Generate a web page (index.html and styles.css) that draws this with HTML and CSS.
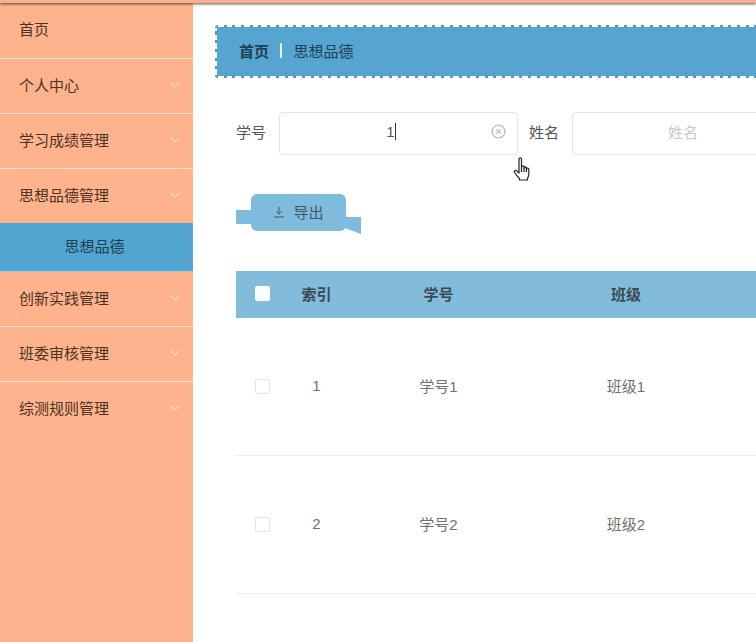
FILE: index.html
```html
<!DOCTYPE html>
<html lang="zh">
<head>
<meta charset="utf-8">
<title>思想品德</title>
<link rel="stylesheet" href="styles.css">
</head>
<body>
<header class="topbar"></header>
<div class="layout">
  <aside class="sidebar">
    <div class="menu-item first">首页</div>
    <div class="menu-item">个人中心<svg class="chev" viewBox="0 0 10 6"><path d="M1 1l4 4 4-4"/></svg></div>
    <div class="menu-item">学习成绩管理<svg class="chev" viewBox="0 0 10 6"><path d="M1 1l4 4 4-4"/></svg></div>
    <div class="menu-item open">思想品德管理<svg class="chev" viewBox="0 0 10 6"><path d="M1 1l4 4 4-4"/></svg></div>
    <div class="sub-item">思想品德</div>
    <div class="menu-item">创新实践管理<svg class="chev" viewBox="0 0 10 6"><path d="M1 1l4 4 4-4"/></svg></div>
    <div class="menu-item">班委审核管理<svg class="chev" viewBox="0 0 10 6"><path d="M1 1l4 4 4-4"/></svg></div>
    <div class="menu-item last">综测规则管理<svg class="chev" viewBox="0 0 10 6"><path d="M1 1l4 4 4-4"/></svg></div>
  </aside>
  <main class="main">
    <nav class="crumbs"><b>首页</b><span class="sep"></span><span>思想品德</span></nav>
    <form class="filters">
      <label class="flabel">学号</label>
      <div class="field first-field"><span class="val">1<i class="caret"></i></span>
        <svg class="clear" viewBox="0 0 14 14"><circle cx="7" cy="7" r="6"/><path d="M5 5l4 4M9 5l-4 4"/></svg>
      </div>
      <label class="flabel second">姓名</label>
      <div class="field second-field"><span class="ph">姓名</span></div>
    </form>
    <div class="actions">
      <div class="export">
        <span class="tail tail-l"></span>
        <button type="button" class="btn"><svg class="dl" viewBox="0 0 12 12"><path d="M6 1v7M3 5.2L6 8l3-2.8M1 11h10"/></svg>导出</button>
        <span class="tail tail-r"></span>
      </div>
    </div>
    <table class="grid">
      <colgroup><col class="c1"><col class="c2"><col class="c3"><col class="c4"><col class="c5"></colgroup>
      <thead>
        <tr><th class="check"><span class="box head-box"></span></th><th>索引</th><th>学号</th><th>班级</th><th></th></tr>
      </thead>
      <tbody>
        <tr><td class="check"><span class="box"></span></td><td>1</td><td>学号1</td><td>班级1</td><td></td></tr>
        <tr><td class="check"><span class="box"></span></td><td>2</td><td>学号2</td><td>班级2</td><td></td></tr>
      </tbody>
    </table>
  </main>
</div>
<svg class="cursor" viewBox="0 0 18 26"><path d="M6 2c0-1.500 2.500-1.500 2.500 0v8c0-1.500 2.500-1.500 2.500 0v1c0-1.400 2.400-1.400 2.400 0v1c0-1.300 2.400-1.300 2.400 0v5c0 2-.8 3-1.300 4.500v1.500H6.500v-1.500C5 20 3.500 18.500 1.500 15.500c-1-1.600.9-2.800 2.200-1.600L6 16z"/><path d="M8.500 10v5M11 11v4M13.400 12v3"/></svg>
</body>
</html>
```
FILE: styles.css
```css
* { box-sizing: border-box; }
html, body { margin: 0; height: 100%; overflow: hidden; }
body {
  width: 756px;
  height: 642px;
  background: #fff;
  font-family: "Liberation Sans", "Noto Sans CJK SC", sans-serif;
  font-size: 15px;
  color: #333;
  display: flex;
  flex-direction: column;
  position: relative;
}
.topbar {
  height: 3px;
  flex: none;
  background: #f8b08c;
  box-shadow: 0 1px 3px rgba(40, 30, 25, .8);
  position: relative;
  z-index: 2;
}
.layout { flex: 1; display: flex; min-height: 0; }
.sidebar { width: 193px; flex: none; background: #ffb38d; }
.menu-item {
  height: 55px;
  border-bottom: 1px solid #fde3d3;
  padding: 0 13px 3px 19px;
  display: flex;
  align-items: center;
  justify-content: space-between;
  color: #4a3226;
  font-size: 15px;
}
.menu-item.first { height: 56px; padding-bottom: 4px; }
.menu-item.open { height: 54px; border-bottom: 0; }
.menu-item.last { border-bottom: 0; padding-bottom: 4px; }
.chev { width: 10px; height: 6px; fill: none; stroke: #fdd9c5; stroke-width: 1.2; }
.sub-item {
  height: 49px;
  background: #53a5d1;
  border-bottom: 1px solid #a9c9d6;
  display: flex;
  align-items: center;
  justify-content: center;
  color: #1f3f55;
  padding: 0 4px 3px 0;
}
.main { flex: 1; min-width: 0; padding: 22px 0 0 23px; overflow: hidden; }
.crumbs {
  margin: 0 -40px 0 -1px;
  height: 53px;
  background:
    linear-gradient(#56a5d1, #56a5d1) 2px 2px / calc(100% - 4px) calc(100% - 4px) no-repeat,
    repeating-linear-gradient(90deg, #5098c4 0 3px, transparent 3px 8.700px) 0 0 / 100% 3px no-repeat,
    repeating-linear-gradient(90deg, #5098c4 0 3px, transparent 3px 8.700px) 0 100% / 100% 3px no-repeat,
    repeating-linear-gradient(0deg, #5098c4 0 3px, transparent 3px 8.700px) 0 0 / 3px 100% no-repeat;
  border-radius: 3px;
  display: flex;
  align-items: center;
  padding: 0 0 3px 24px;
  font-size: 15px;
  color: #1f3f55;
}
.crumbs b { font-weight: 700; }
.sep { width: 1.500px; height: 15px; background: #e6f2f8; margin: 0 12px 0 11px; }
.filters {
  display: flex;
  align-items: center;
  margin: 34px 0 0 20px;
  height: 43px;
  width: 700px;
}
.flabel { color: #555; width: 43px; flex: none; padding-bottom: 4px; }
.flabel.second { margin-left: 11px; }
.field {
  height: 43px;
  flex: none;
  border: 1px solid #e4e4ea;
  border-radius: 4px;
  background: #fff;
  display: flex;
  align-items: center;
  justify-content: center;
  position: relative;
  padding-bottom: 4px;
}
.first-field { width: 239px; padding-right: 15px; }
.second-field { width: 224px; padding-right: 2px; }
.val { color: #555; font-size: 15px; display: inline-flex; align-items: center; }
.caret { width: 1px; height: 17px; background: #333; margin-left: 0; }
.ph { color: #c4c6cc; }
.clear {
  position: absolute;
  right: 11px;
  top: 11px;
  width: 15px;
  height: 15px;
  fill: none;
  stroke: #b8bcc4;
  stroke-width: 1.2;
}
.actions { margin: 39px 0 0 20px; height: 37px; }
.export { display: flex; width: 126px; height: 37px; }
.btn {
  width: 95px;
  height: 37px;
  border: 0;
  border-radius: 6px;
  background: #7fbbdc;
  color: #44565f;
  font: inherit;
  font-size: 15px;
  display: flex;
  align-items: center;
  justify-content: center;
  gap: 8px;
  padding: 0 0 2px 0;
  position: relative;
  z-index: 1;
}
.dl { width: 12px; height: 12px; fill: none; stroke: #44565f; stroke-width: 1; }
.tail { flex: none; width: 16px; background: #7fbbdc; }
.tail-l { height: 14px; margin-top: 16px; margin-right: -1px; }
.tail-r {
  height: 17px;
  margin-top: 23px;
  margin-left: -1px;
  clip-path: polygon(0 0, 100% 0, 100% 100%, 0 65%);
}
.grid {
  margin: 40px 0 0 20px;
  width: 1100px;
  border-collapse: collapse;
  table-layout: fixed;
}
.c1 { width: 54px; }
.c2 { width: 53px; }
.c3 { width: 191px; }
.c4 { width: 184px; }
.grid th {
  height: 47px;
  background: #82bcdc;
  color: #3c4a52;
  font-weight: 700;
  font-size: 15px;
  text-align: center;
  padding: 0 0 2px;
}
.grid td {
  height: 138px;
  border-bottom: 1px solid #e9eef8;
  color: #707070;
  text-align: center;
  padding: 0 0 2px;
}
.grid tbody tr:first-child td { height: 137px; }
.grid th.check { padding: 0 0 2px; }
.grid td.check { padding: 1px 0 0; }
.box {
  display: block;
  width: 15px;
  height: 15px;
  margin-left: 19px;
  background: #fff;
  border: 1px solid #e0e3ee;
  border-radius: 2px;
}
.head-box { border-color: #fff; }
.cursor {
  position: absolute;
  left: 513px;
  top: 157px;
  width: 18px;
  height: 26px;
  fill: #fff;
  stroke: #222;
  stroke-width: 1.2;
  stroke-linejoin: round;
  z-index: 5;
}
```
